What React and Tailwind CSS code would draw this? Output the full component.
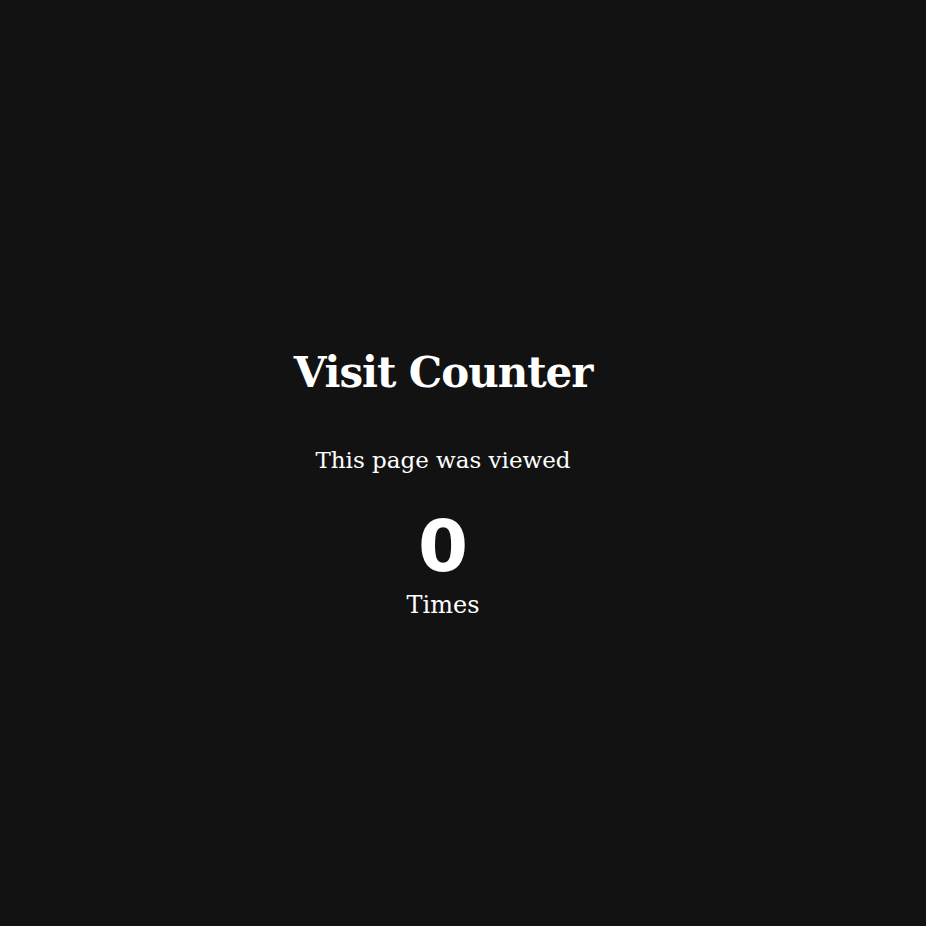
import React, { useState } from 'react';

export default function App() {
  const [count] = useState(0);

  return (
    <div className="flex min-h-screen flex-col items-center bg-[#121212] pr-[40px] pt-[352px] text-white [font-family:'DejaVu_Serif',serif]">
      <h1 className="text-[42px] font-bold leading-none tracking-tight">Visit Counter</h1>
      <p className="mt-[55px] text-[23px] leading-none">This page was viewed</p>
      <span className="mt-[38px] text-[72px] font-bold leading-none [font-family:'DejaVu_Sans',sans-serif]">{count}</span>
      <p className="mt-[11px] text-[24px] leading-none">Times</p>
    </div>
  );
}
